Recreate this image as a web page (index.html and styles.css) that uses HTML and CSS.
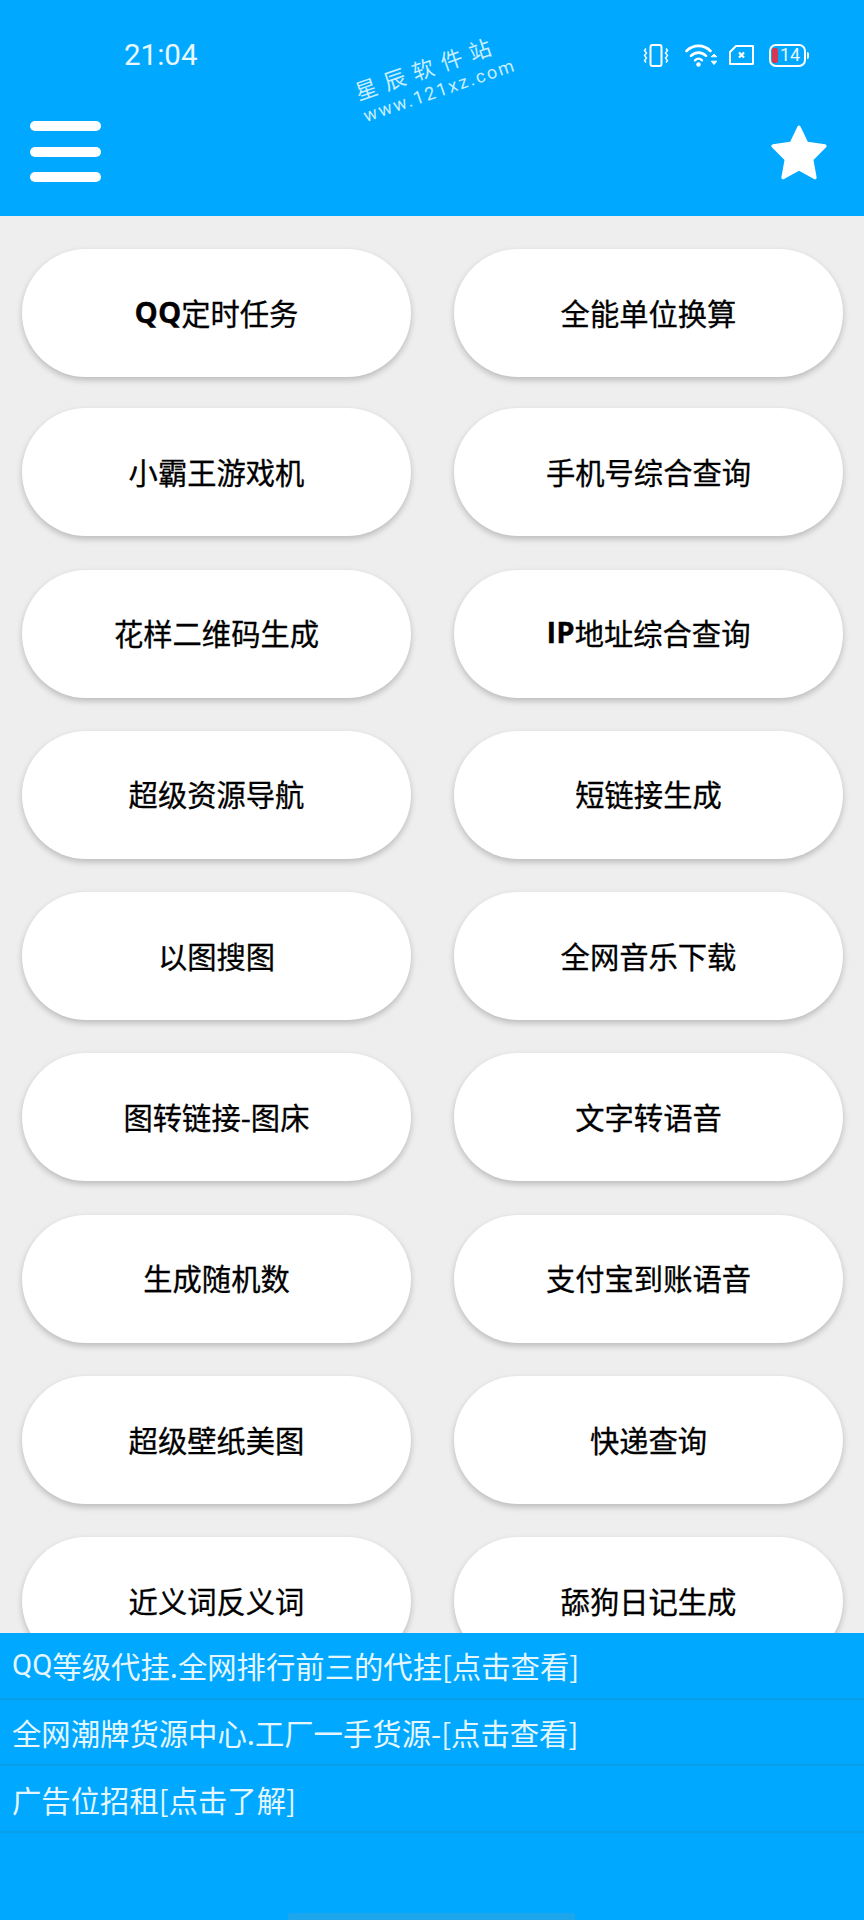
FILE: index.html
```html
<!DOCTYPE html>
<html lang="zh-CN">
<head>
<meta charset="utf-8">
<title>工具箱</title>
<link rel="stylesheet" href="styles.css">
</head>
<body>
<div class="page">
  <header class="header">
    <div class="status">
      <span class="time">21:04</span>
      <div class="status-icons">
        <svg class="ic-vib" viewBox="0 0 26 23" fill="none" stroke="#fff" stroke-width="2"><rect x="7.500" y="1" width="11" height="21" rx="2"/><path d="M3 4.500L1.500 6.500 3.500 9 1.500 11.500l2 2.500-2 2.500L3 18.500M23 4.500l1.500 2-2 2.500 2 2.500-2 2.500 2 2.500-1.500 2" stroke-width="1.400"/></svg>
        <svg class="ic-wifi" viewBox="0 0 32 24" fill="none" stroke="#fff" stroke-linecap="round"><path d="M1.500 8C8 1.200 19 1.200 25.500 8" stroke-width="2.600"/><path d="M6 12.800c4.200-4.200 10.800-4.200 15 0" stroke-width="2.600"/><path d="M10 17.300c2-2 5-2 7 0" stroke-width="2.400"/><circle cx="13.500" cy="21.500" r="2.200" fill="#fff" stroke="none"/><path d="M26.500 13.500l2.500-2.500 2.500 2.500zM26.500 18.500l2.500 3 2.500-3z" fill="#fff" stroke="#fff" stroke-width="1"/></svg>
        <svg class="ic-sim" viewBox="0 0 25 20" fill="none" stroke="#fff" stroke-width="2"><path d="M7 1h17v18H1V7z" stroke-linejoin="round"/><path d="M10 7.500l5 5M15 7.500l-5 5" stroke-width="2.200"/></svg>
        <div class="battery">
          <span class="batt-level"></span><span class="batt-num">14</span>
        </div>
      </div>
    </div>
    <div class="toolbar">
      <div class="menu"><span></span><span></span><span></span></div>
      <svg class="star" viewBox="0 0 58 56"><path d="M27.500 2.500c.7-1.400 2.300-1.400 3 0l7.300 15.300 17.300 2.400c1.500.2 2.100 2 1 3L43.500 36l3.100 17.200c.3 1.500-1.300 2.600-2.600 1.900L29 46.800 14 55.100c-1.300.7-2.900-.4-2.600-1.900L14.500 36 1.900 23.200c-1.100-1-.5-2.800 1-3l17.300-2.400z" fill="#fff"/></svg>
    </div>
    <div class="watermark"><div class="wm-cn">星辰软件站</div><div class="wm-url">www.121xz.com</div></div>
  </header>

  <main class="grid">
    <a class="btn"><b class="lat">QQ</b>定时任务</a><a class="btn">全能单位换算</a>
    <a class="btn">小霸王游戏机</a><a class="btn">手机号综合查询</a>
    <a class="btn">花样二维码生成</a><a class="btn"><b class="lat">IP</b>地址综合查询</a>
    <a class="btn">超级资源导航</a><a class="btn">短链接生成</a>
    <a class="btn">以图搜图</a><a class="btn">全网音乐下载</a>
    <a class="btn">图转链接-图床</a><a class="btn">文字转语音</a>
    <a class="btn">生成随机数</a><a class="btn">支付宝到账语音</a>
    <a class="btn">超级壁纸美图</a><a class="btn">快递查询</a>
    <a class="btn">近义词反义词</a><a class="btn">舔狗日记生成</a>
  </main>

  <footer class="ads">
    <div class="ad"><span class="ad-lat">QQ</span>等级代挂.全网排行前三的代挂[点击查看]</div>
    <div class="ad">全网潮牌货源中心.工厂一手货源-[点击查看]</div>
    <div class="ad">广告位招租[点击了解]</div>
    <div class="home-bar"></div>
  </footer>
</div>
</body>
</html>
```
FILE: styles.css
```css
* { box-sizing: border-box; }
html, body { margin: 0; padding: 0; }
body { background: #eeeeee; font-family: Roboto, "Noto Sans CJK SC", sans-serif; }
.page { position: relative; width: 864px; height: 1920px; overflow: hidden; background: #eeeeee; }

.header { position: relative; height: 216px; background: #00a8ff; color: #fff; }
.status { height: 110px; padding: 36px 55px 0 124px; display: flex; justify-content: space-between; align-items: flex-start; }
.time { font-size: 29.500px; line-height: 38px; color: #e9f8ff; }
.status-icons { display: flex; align-items: center; gap: 12px; height: 38px; }
.ic-vib { width: 26px; height: 23px; }
.ic-wifi { width: 32px; height: 24px; margin-left: 4px; }
.ic-sim { width: 25px; height: 20px; }
.battery { position: relative; width: 37px; height: 23px; margin: 0 3px 0 3px; border: 2px solid #fff; border-radius: 7px; display: flex; align-items: center; padding-left: 1px; }
.battery::after { content: ""; position: absolute; right: -5px; top: 6px; width: 2px; height: 7px; background: #fff; border-radius: 0 2px 2px 0; }
.batt-level { width: 6px; height: 15px; background: #d8384f; border-radius: 2px; flex: none; }
.batt-num { font-size: 18px; line-height: 18px; margin-left: 2px; color: #e9f8ff; }

.toolbar { height: 106px; padding: 11px 36px 0 30px; display: flex; justify-content: space-between; align-items: flex-start; }
.menu { display: flex; flex-direction: column; gap: 15.500px; width: 71px; }
.menu span { display: block; height: 10px; background: #fff; border-radius: 5px; }
.star { width: 58px; height: 56px; margin-top: 3px; }

.watermark { position: absolute; left: 367px; top: 78px; transform: rotate(-19deg); transform-origin: left bottom; color: #c9eeff; line-height: 1; }
.wm-cn { font-size: 22px; letter-spacing: 8px; font-family: "Noto Sans CJK SC", sans-serif; white-space: nowrap; }
.wm-url { font-size: 18px; letter-spacing: 2.100px; margin-top: 7px; white-space: nowrap; }

.grid { display: grid; grid-template-columns: 389px 389px; column-gap: 43px; row-gap: 33.300px; padding: 33px 0 0 22px; }
.btn { height: 128px; padding-bottom: 3px; border-radius: 64px; background: #fff; box-shadow: 0 3px 6px rgba(0,0,0,.22); display: flex; align-items: center; justify-content: center; color: #000; font-size: 29.300px; font-weight: 400; font-family: "Noto Sans CJK SC", sans-serif; -webkit-text-stroke: .3px #000; }
.btn:nth-child(-n+2) { margin-bottom: -2px; }
.lat { font-family: "Open Sans", sans-serif; font-weight: 700; }

.ads { position: absolute; left: 0; right: 0; bottom: 0; height: 287px; background: #00a8ff; }
.ad { height: 66.700px; padding-left: 12px; border-bottom: 2px solid #0a9de8; display: flex; align-items: center; color: #e4f7ff; font-size: 29.350px; font-family: "Noto Sans CJK SC", sans-serif; font-weight: 400; white-space: nowrap; }
.ad-lat { font-family: Roboto, sans-serif; }
.home-bar { position: absolute; left: 288px; bottom: 0; width: 287px; height: 7px; background: #1ea6ec; border-radius: 3px 3px 0 0; }
```
